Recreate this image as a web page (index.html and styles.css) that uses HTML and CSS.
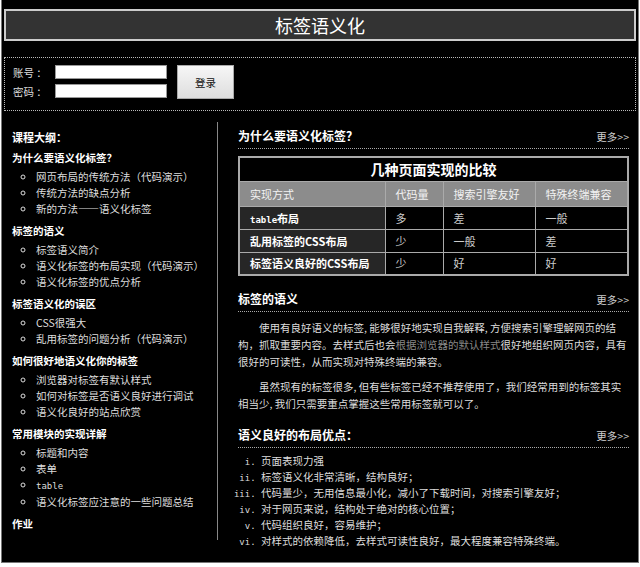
FILE: index.html
```html
<!DOCTYPE html>
<html lang="zh-CN">
<head>
    <meta charset="UTF-8">
    <title>标签语义化</title>
    <link rel="stylesheet" href="styles.css">
</head>
<body>

<div class="page">
    <div class="header">
        <h1>标签语义化</h1>
    </div>

    <form class="login">
        <div class="fields">
            <div class="field">
                <label>账号 ：</label>
                <input type="text">
            </div>
            <div class="field">
                <label>密码 ：</label>
                <input type="password">
            </div>
        </div>
        <button type="button" class="login-btn">登录</button>
    </form>

    <div class="main">
        <div class="sidebar">
            <h2>课程大纲：</h2>

            <h3>为什么要语义化标签？</h3>
            <ul>
                <li>网页布局的传统方法（代码演示）</li>
                <li>传统方法的缺点分析</li>
                <li>新的方法——语义化标签</li>
            </ul>

            <h3>标签的语义</h3>
            <ul>
                <li>标签语义简介</li>
                <li>语义化标签的布局实现（代码演示）</li>
                <li>语义化标签的优点分析</li>
            </ul>

            <h3>标签语义化的误区</h3>
            <ul>
                <li>CSS很强大</li>
                <li>乱用标签的问题分析（代码演示）</li>
            </ul>

            <h3>如何很好地语义化你的标签</h3>
            <ul>
                <li>浏览器对标签有默认样式</li>
                <li>如何对标签是否语义良好进行调试</li>
                <li>语义化良好的站点欣赏</li>
            </ul>

            <h3>常用模块的实现详解</h3>
            <ul>
                <li>标题和内容</li>
                <li>表单</li>
                <li><code>table</code></li>
                <li>语义化标签应注意的一些问题总结</li>
            </ul>

            <h3>作业</h3>
        </div>

        <div class="content">
            <div class="section">
                <div class="section-head">
                    <h2>为什么要语义化标签？</h2>
                    <a href="#">更多&gt;&gt;</a>
                </div>
                <table class="compare">
                    <tr>
                        <th colspan="4" class="caption">几种页面实现的比较</th>
                    </tr>
                    <tr class="head-row">
                        <td>实现方式</td>
                        <td>代码量</td>
                        <td>搜索引擎友好</td>
                        <td>特殊终端兼容</td>
                    </tr>
                    <tr>
                        <td class="name"><code>table</code>布局</td>
                        <td>多</td>
                        <td>差</td>
                        <td>一般</td>
                    </tr>
                    <tr>
                        <td class="name">乱用标签的CSS布局</td>
                        <td>少</td>
                        <td>一般</td>
                        <td>差</td>
                    </tr>
                    <tr>
                        <td class="name">标签语义良好的CSS布局</td>
                        <td>少</td>
                        <td>好</td>
                        <td>好</td>
                    </tr>
                </table>
            </div>

            <div class="section">
                <div class="section-head">
                    <h2>标签的语义</h2>
                    <a href="#">更多&gt;&gt;</a>
                </div>
                <p>使用有良好语义的标签, 能够很好地实现自我解释, 方便搜索引擎理解网页的结构，抓取重要内容。去样式后也会<span class="muted">根据浏览器的默认样式</span>很好地组织网页内容，具有很好的可读性，从而实现对特殊终端的兼容。</p>
                <p>虽然现有的标签很多, 但有些标签已经不推荐使用了，我们经常用到的标签其实相当少, 我们只需要重点掌握这些常用标签就可以了。</p>
            </div>

            <div class="section">
                <div class="section-head">
                    <h2>语义良好的布局优点：</h2>
                    <a href="#">更多&gt;&gt;</a>
                </div>
                <ol>
                    <li>页面表现力强</li>
                    <li>标签语义化非常清晰，结构良好；</li>
                    <li>代码量少，无用信息最小化，减小了下载时间，对搜索引擎友好；</li>
                    <li>对于网页来说，结构处于绝对的核心位置；</li>
                    <li>代码组织良好，容易维护；</li>
                    <li>对样式的依赖降低，去样式可读性良好，最大程度兼容特殊终端。</li>
                </ol>
            </div>
        </div>
    </div>
</div>

</body>
</html>
```

FILE: styles.css
```css
* {
    margin: 0;
    padding: 0;
    box-sizing: border-box;
    font-family: "Noto Sans CJK SC", "Liberation Sans", sans-serif;
}

body {
    background: #fff;
}

.page {
    width: 638px;
    height: 563px;
    margin-left: 1px;
    padding: 9px 2px 0 2px;
    background: #000;
    border: 1px solid #777;
    border-top: none;
}

.header {
    height: 32px;
    background: #333;
    border: 2px solid #ccc;
}

.header h1 {
    font-size: 18px;
    line-height: 28px;
    font-weight: normal;
    color: #fff;
    text-align: center;
}

/* login bar */
.login {
    display: flex;
    align-items: flex-start;
    height: 54px;
    margin-top: 16px;
    padding: 7px 0 0 8px;
    border: 1px dotted #bbb;
}

.fields {
    display: flex;
    flex-direction: column;
    gap: 5px;
}

.field {
    display: flex;
    align-items: center;
    height: 14px;
}

.field label {
    width: 42px;
    font-size: 10.5px;
    color: #ddd;
}

.field input {
    width: 112px;
    height: 14px;
    background: #fff;
    border: 1px solid #999;
}

.login-btn {
    width: 57px;
    height: 34px;
    margin-left: 10px;
    background: linear-gradient(#f6f6f6, #dedede);
    border: 1px solid #aaa;
    font-size: 10.5px;
    color: #111;
}

/* two columns */
.main {
    display: flex;
    margin-top: 11px;
}

.sidebar {
    width: 214px;
    height: 418px;
    padding: 5px 0 0 8px;
    border-right: 1px solid #888;
}

.sidebar h2 {
    font-size: 11px;
    line-height: 20px;
    color: #fff;
    margin-bottom: 1px;
}

.sidebar h3 {
    font-size: 10.5px;
    line-height: 20px;
    color: #fff;
    margin-top: 4px;
}

.sidebar h2 + h3 {
    margin-top: 0;
}

.sidebar ul {
    margin-top: 1px;
    padding-left: 24px;
    list-style: circle;
}

.sidebar li {
    font-size: 10.5px;
    line-height: 16px;
    color: #ddd;
}

code {
    font-family: "DejaVu Sans Mono", monospace;
    font-size: 9px;
}

.content {
    flex: 1;
    padding: 4px 7px 0 20px;
}

.section + .section {
    margin-top: 13px;
}

.section-head {
    display: flex;
    justify-content: space-between;
    align-items: baseline;
    line-height: 20px;
    padding-bottom: 1px;
    border-bottom: 1px dotted #aaa;
}

.section-head h2 {
    font-size: 12px;
    color: #fff;
}

.section-head a {
    font-size: 10.5px;
    color: #ccc;
    text-decoration: none;
}

/* comparison table */
.compare {
    width: 100%;
    margin-top: 7px;
    border-collapse: collapse;
    border: 2px solid #aaa;
}

.compare td,
.compare th {
    border: 1px solid #aaa;
    font-size: 11px;
    height: 23px;
    padding: 0 10px;
    text-align: left;
    color: #ccc;
}

.compare .caption {
    height: 24px;
    font-size: 14px;
    text-align: center;
    color: #fff;
    background: #000;
}

.compare .head-row td {
    height: 25px;
    background: #8c8c8c;
    color: #f2f2f2;
}

.compare td:nth-child(1) { width: 146px; }
.compare td:nth-child(2) { width: 58px; }
.compare td:nth-child(3) { width: 92px; }

.compare td.name {
    font-weight: bold;
    color: #fff;
    background: #262626;
}

.compare td.name code {
    font-weight: bold;
}

.section p {
    margin-top: 7px;
    font-size: 10.5px;
    line-height: 17px;
    text-indent: 21px;
    color: #ddd;
}

.section p + p {
    margin-top: 8px;
}

.muted {
    color: #888;
}

.section ol {
    margin-top: 5px;
    padding-left: 23px;
    list-style: lower-roman;
}

.section ol li {
    font-size: 10.5px;
    line-height: 16px;
    color: #ddd;
}

.section ol li::marker {
    font-family: "DejaVu Sans Mono", monospace;
    font-size: 9px;
}
```
